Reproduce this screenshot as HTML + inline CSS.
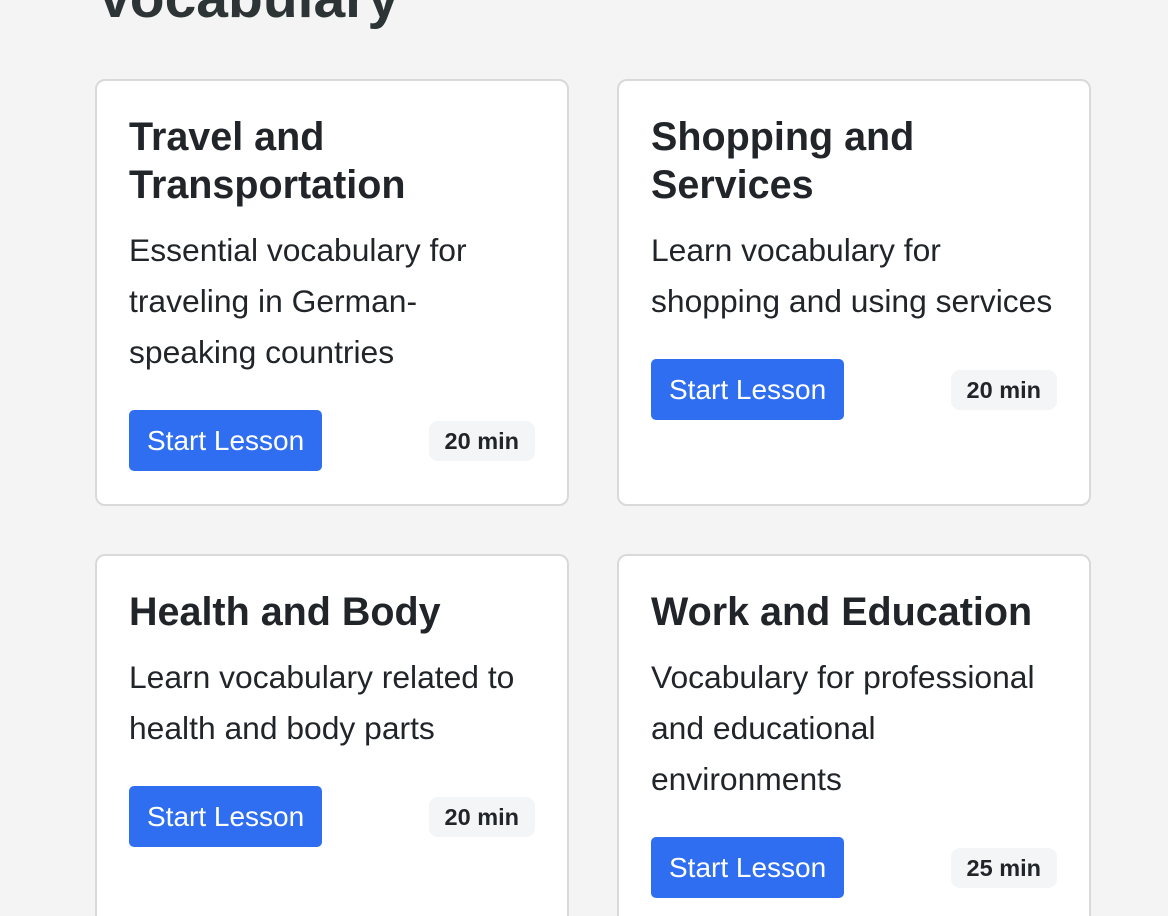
<!DOCTYPE html>
<html><head><meta charset="utf-8"><style>
html,body{margin:0;width:1168px;height:916px;overflow:hidden}
body{background:#f4f4f4;font-family:"Liberation Sans",Arial,sans-serif;position:relative}
h1{position:absolute;left:96px;top:-31px;margin:0;font-size:57px;line-height:58px;font-weight:bold;color:#2d3436}
.card{position:absolute;width:474px;box-sizing:border-box;background:#fff;border:2px solid #d9d9d9;border-radius:10px;padding:32px 32px 33px;overflow:hidden}
.card.cut{border-bottom:none;border-radius:10px 10px 0 0}
.card h2{margin:0 0 16px;font-size:39.5px;line-height:48px;color:#212529;font-weight:bold}
.card p{margin:0 0 32px;font-size:31.8px;line-height:51px;color:#212529}
.row{display:flex;justify-content:space-between;align-items:center}
.btn{background:#2f6ef0;color:#fff;font-size:28px;height:61px;line-height:61px;padding:0 18px;border-radius:5px}
.badge{background:#f4f5f7;font-weight:bold;font-size:23.5px;color:#212529;height:40px;line-height:40px;padding:0 16px;border-radius:9px}
</style></head><body>
<h1>Vocabulary</h1>
<div class="card" style="left:95px;top:79px;height:427px"><h2>Travel and Transportation</h2><p>Essential vocabulary for traveling in German-speaking countries</p><div class="row"><span class="btn">Start Lesson</span><span class="badge">20 min</span></div></div>
<div class="card" style="left:617px;top:79px;height:427px"><h2>Shopping and Services</h2><p>Learn vocabulary for shopping and using services</p><div class="row"><span class="btn">Start Lesson</span><span class="badge">20 min</span></div></div>
<div class="card cut" style="left:95px;top:554px;height:362px"><h2>Health and Body</h2><p>Learn vocabulary related to health and body parts</p><div class="row"><span class="btn">Start Lesson</span><span class="badge">20 min</span></div></div>
<div class="card cut" style="left:617px;top:554px;height:362px"><h2>Work and Education</h2><p>Vocabulary for professional and educational environments</p><div class="row"><span class="btn">Start Lesson</span><span class="badge">25 min</span></div></div>
</body></html>
